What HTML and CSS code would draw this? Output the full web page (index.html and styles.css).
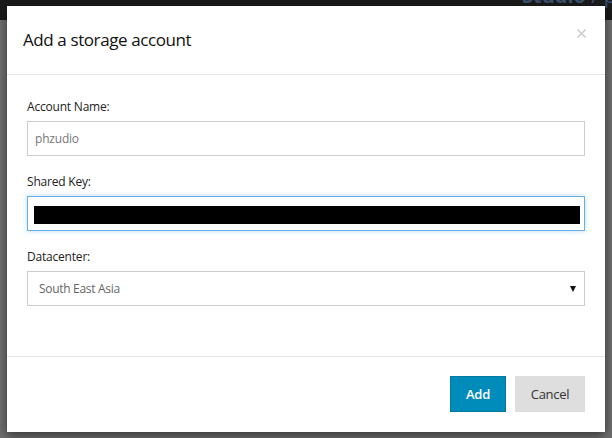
FILE: index.html
```html
<!DOCTYPE html>
<html>
<head>
<meta charset="utf-8">
<link rel="stylesheet" href="styles.css">
</head>
<body>
<div class="page">
  <div class="topbar"><span class="crumb"><b>Studio</b> / primary</span></div>
</div>
<div class="modal">
  <div class="modal-header">
    <h4 class="title">Add a storage account</h4>
    <button class="close" aria-label="Close">
      <svg width="9" height="9" viewBox="0 0 9 9"><path d="M0.5 0.5L8.5 8.5M8.5 0.5L0.5 8.5" stroke="#cfcfcf" stroke-width="1.6" fill="none"/></svg>
    </button>
  </div>
  <div class="modal-body">
    <div class="group">
      <label class="label">Account Name:</label>
      <div class="field">phzudio</div>
    </div>
    <div class="group">
      <label class="label">Shared Key:</label>
      <div class="field focus"><span class="masked"></span></div>
    </div>
    <div class="group">
      <label class="label">Datacenter:</label>
      <div class="field select"><span class="sel-text">South East Asia</span>
        <svg class="arrow" width="6" height="6" viewBox="0 0 6 6"><path d="M0 0H6L3 6Z" fill="#111"/></svg>
      </div>
    </div>
  </div>
  <div class="modal-footer">
    <button class="btn btn-primary">Add</button>
    <button class="btn btn-default">Cancel</button>
  </div>
</div>
</body>
</html>
```

FILE: styles.css
```css
html, body {
  margin: 0;
  padding: 0;
}
body {
  width: 612px;
  height: 438px;
  overflow: hidden;
  background: #6f6f6f;
  font-family: "Open Sans", "Noto Sans", sans-serif;
}
.page {
  height: 438px;
}
.topbar {
  height: 20px;
  background: #1b1b1b;
  overflow: hidden;
  padding-left: 522px;
  white-space: nowrap;
}
.crumb {
  display: block;
  margin-top: -14px;
  font-size: 20px;
  line-height: 20px;
  color: #3c5270;
}
.crumb b {
  font-weight: 700;
}
.modal {
  position: absolute;
  left: 7px;
  top: 6px;
  width: 598px;
  height: 426px;
  background: #fff;
  box-shadow: 0 3px 10px rgba(0, 0, 0, 0.55);
  display: flex;
  flex-direction: column;
}
.modal-header {
  display: flex;
  justify-content: space-between;
  align-items: flex-start;
  padding: 21px 19px 22px 16px;
  border-bottom: 1px solid #e5e5e5;
}
.title {
  margin: 0;
  font-size: 17px;
  line-height: 25px;
  font-weight: 400;
  letter-spacing: -0.4px;
  color: #111;
}
.close {
  margin-top: 2px;
  padding: 0;
  border: 0;
  background: none;
  width: 9px;
  height: 9px;
  line-height: 0;
}
.modal-body {
  flex: 1;
  padding: 23px 20px 0 20px;
}
.group {
  margin-bottom: 17px;
}
.label {
  display: block;
  font-size: 12px;
  line-height: 17px;
  margin-bottom: 6px;
  color: #222;
  letter-spacing: -0.2px;
}
.field {
  box-sizing: border-box;
  height: 35px;
  border: 1px solid #cccccc;
  padding: 0 7px;
  display: flex;
  align-items: center;
  font-size: 12px;
  color: #777;
  letter-spacing: -0.2px;
}
.field.focus {
  border-color: #66afe9;
  box-shadow: 0 0 5px rgba(102, 175, 233, 0.45);
  padding: 9px 4px 6px 6px;
  align-items: stretch;
}
.masked {
  flex: 1;
  background: #000;
}
.select {
  justify-content: space-between;
  padding: 0 8px 0 11px;
  color: #666;
  letter-spacing: -0.3px;
}
.arrow {
  margin-top: 1px;
}
.modal-footer {
  display: flex;
  justify-content: flex-end;
  gap: 9px;
  padding: 19px 20px 20px 20px;
  border-top: 1px solid #e5e5e5;
}
.btn {
  box-sizing: border-box;
  height: 36px;
  font-family: "Open Sans", "Noto Sans", sans-serif;
  font-size: 13px;
  letter-spacing: -0.3px;
  border: 1px solid transparent;
  padding: 0;
  cursor: pointer;
}
.btn-primary {
  width: 56px;
  background: #008cba;
  border-color: #0079a1;
  color: #fff;
  font-weight: 600;
}
.btn-default {
  width: 70px;
  background: #dedede;
  color: #333;
}
```
